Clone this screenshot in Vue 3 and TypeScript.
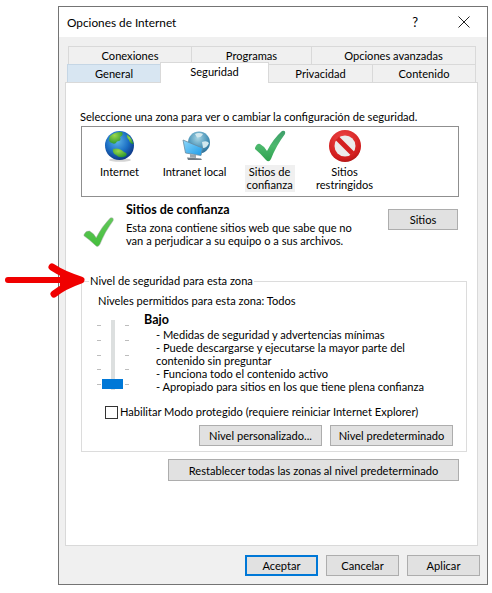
<template>
  <div class="page">
    <div class="dialog">
      <div class="titlebar">
        <span class="title">Opciones de Internet</span>
        <span class="help">?</span>
        <svg class="close" width="12" height="12" viewBox="0 0 12 12">
          <path d="M0.5 0.5 L11.5 11.5 M11.5 0.5 L0.5 11.5" stroke="#222" stroke-width="1" fill="none" />
        </svg>
      </div>

      <div class="body">
        <div class="tabs top-tabs">
          <div v-for="t in topTabs" :key="t.label" class="tab" :style="{ width: t.width + 'px' }">{{ t.label }}</div>
        </div>
        <div class="tabs front-tabs">
          <div
            v-for="t in frontTabs"
            :key="t.label"
            class="tab"
            :class="{ hover: t.label === 'General', active: t.label === 'Seguridad' }"
            :style="{ width: t.width + 'px' }"
          >{{ t.label }}</div>
        </div>

        <div class="panel">
          <div class="intro">Seleccione una zona para ver o cambiar la configuración de seguridad.</div>

          <div class="zones">
            <div class="zone">
              <svg width="34" height="34" viewBox="0 0 34 34">
                <defs>
                  <radialGradient id="sea" cx="0.42" cy="0.35" r="0.7">
                    <stop offset="0" stop-color="#5db4e8" />
                    <stop offset="0.55" stop-color="#1c6fc4" />
                    <stop offset="1" stop-color="#0b2f7c" />
                  </radialGradient>
                  <radialGradient id="land" cx="0.4" cy="0.3" r="0.8">
                    <stop offset="0" stop-color="#9bd84a" />
                    <stop offset="1" stop-color="#1f8f2e" />
                  </radialGradient>
                </defs>
                <ellipse cx="17" cy="31" rx="11" ry="1.8" fill="#d4d4d4" />
                <circle cx="16.5" cy="16.5" r="14.5" fill="url(#sea)" />
                <path d="M7 7 Q12 2.5 19 3 Q21 6 17 8 Q19 12 14 12.5 Q12 16 9 14 Q4.5 13 7 7 Z" fill="url(#land)" />
                <path d="M24 5.5 Q29 9 30.5 15 Q27 15 26 11 Q23 8 24 5.5 Z" fill="url(#land)" />
                <path d="M10 20 Q16 18 21 23 Q25 24 23 27 Q17 30 13 26 Q9 24 10 20 Z" fill="url(#land)" />
              </svg>
              <span class="zone-label">Internet</span>
            </div>

            <div class="zone">
              <svg width="34" height="34" viewBox="0 0 34 34">
                <defs>
                  <radialGradient id="sea2" cx="0.45" cy="0.3" r="0.75">
                    <stop offset="0" stop-color="#a6d4e4" />
                    <stop offset="0.6" stop-color="#4a94b8" />
                    <stop offset="1" stop-color="#2a6a92" />
                  </radialGradient>
                  <linearGradient id="screen" x1="0" y1="0" x2="1" y2="1">
                    <stop offset="0" stop-color="#8fd8fa" />
                    <stop offset="1" stop-color="#1c9be8" />
                  </linearGradient>
                </defs>
                <circle cx="21" cy="13.5" r="11" fill="url(#sea2)" />
                <path d="M17 5 Q21 3 25 5 Q23 9 19 8.5 Z M24 13 Q29 11 31 14 Q29 19 25 19 Z" fill="#d2e8ee" />
                <path d="M5 11 L24.5 19 L23 26.5 L7.5 24 Z" fill="url(#screen)" stroke="#6b8ba0" stroke-width="0.8" />
                <path d="M12 25 L18 26 L18 29 L12 28.5 Z" fill="#9aa6ad" />
                <path d="M9 28.5 L23 29.5 L24 31 L10 31 Z" fill="#6f7b84" />
              </svg>
              <span class="zone-label">Intranet local</span>
            </div>

            <div class="zone">
              <svg width="34" height="34" viewBox="0 0 34 34">
                <defs>
                  <linearGradient id="trust" x1="0" y1="0" x2="0" y2="1">
                    <stop offset="0" stop-color="#3f9e6b" />
                    <stop offset="0.5" stop-color="#4cb86d" />
                    <stop offset="1" stop-color="#2fa14e" />
                  </linearGradient>
                </defs>
                <path d="M2 19 Q4 14 7 15 Q11 17 14 22 Q20 10 29 2 Q33 1 32 5 Q23 17 18 30 Q16 34 13 31 Q8 25 2 20 Z" fill="url(#trust)" />
              </svg>
              <span class="zone-label selected">Sitios de<br />confianza</span>
            </div>

            <div class="zone">
              <svg width="34" height="34" viewBox="0 0 34 34">
                <defs>
                  <radialGradient id="ban" cx="0.45" cy="0.3" r="0.8">
                    <stop offset="0" stop-color="#f04848" />
                    <stop offset="0.75" stop-color="#cf1c1c" />
                    <stop offset="1" stop-color="#961010" />
                  </radialGradient>
                </defs>
                <circle cx="17" cy="17" r="16" fill="url(#ban)" />
                <circle cx="17" cy="17" r="10.5" fill="#ececec" />
                <path d="M7.5 11 L11 7.5 L26.5 23 L23 26.5 Z" fill="#d42020" />
              </svg>
              <span class="zone-label">Sitios<br />restringidos</span>
            </div>
          </div>

          <div class="details">
            <svg class="details-check" width="32" height="34" viewBox="0 0 34 34">
              <defs>
                <linearGradient id="trust2" x1="0" y1="0" x2="0" y2="1">
                  <stop offset="0" stop-color="#62c85a" />
                  <stop offset="1" stop-color="#44be3c" />
                </linearGradient>
              </defs>
              <path d="M1 20 Q3 15 7 16 Q11 18 14 23 Q20 11 29 2 Q33 1 32 5 Q23 17 18 30 Q16 34 13 31 Q8 26 1 21 Z" fill="url(#trust2)" stroke="#a6a6a6" stroke-width="0.5" />
            </svg>
            <div class="details-text">
              <div class="details-title">Sitios de confianza</div>
              <div class="details-desc">Esta zona contiene sitios web que sabe que no<br />van a perjudicar a su equipo o a sus archivos.</div>
            </div>
            <button class="btn sites-btn">Sitios</button>
          </div>

          <fieldset class="group">
            <legend>Nivel de seguridad para esta zona</legend>
            <div class="allowed">Niveles permitidos para esta zona: Todos</div>
            <div class="level">
              <svg class="slider" width="36" height="74" viewBox="0 0 36 74">
                <rect x="15" y="0" width="4" height="70" fill="#dcdfdf" />
                <g fill="#bdbdbd">
                  <rect v-for="y in ticks" :key="'l' + y" x="1" :y="y" width="4" height="1" />
                  <rect v-for="y in ticks" :key="'r' + y" x="29" :y="y" width="4" height="1" />
                </g>
                <rect x="6" y="59" width="21" height="10" fill="#0078d7" />
              </svg>
              <div class="level-text">
                <div class="level-name">Bajo</div>
                <div class="level-list">
                  - Medidas de seguridad y advertencias mínimas<br />
                  - Puede descargarse y ejecutarse la mayor parte del<br />
                  contenido sin preguntar<br />
                  - Funciona todo el contenido activo<br />
                  - Apropiado para sitios en los que tiene plena confianza
                </div>
              </div>
            </div>
            <div class="protect">
              <span class="checkbox"></span>
              <span>Habilitar Modo protegido (requiere reiniciar Internet Explorer)</span>
            </div>
            <div class="group-buttons">
              <button class="btn level-btn">Nivel personalizado...</button>
              <button class="btn level-btn">Nivel predeterminado</button>
            </div>
          </fieldset>

          <div class="reset-row">
            <button class="btn reset-btn">Restablecer todas las zonas al nivel predeterminado</button>
          </div>
        </div>

        <div class="footer">
          <button class="btn foot-btn primary">Aceptar</button>
          <button class="btn foot-btn">Cancelar</button>
          <button class="btn foot-btn">Aplicar</button>
        </div>
      </div>
    </div>

    <svg class="arrow" width="90" height="40" viewBox="0 0 90 40">
      <path d="M6 20 L78 20" stroke="#f00000" stroke-width="6" stroke-linecap="round" fill="none" />
      <path d="M50 7 Q62 15 79 20 Q62 26 52 34" stroke="#f00000" stroke-width="7" stroke-linecap="round" stroke-linejoin="round" fill="none" />
      <path d="M58 13 L81 20 L58 28 Z" fill="#f00000" />
    </svg>
  </div>
</template>

<script setup lang="ts">
const topTabs = [
  { label: 'Conexiones', width: 123 },
  { label: 'Programas', width: 120 },
  { label: 'Opciones avanzadas', width: 165 },
]

const frontTabs = [
  { label: 'General', width: 93 },
  { label: 'Seguridad', width: 109 },
  { label: 'Privacidad', width: 103 },
  { label: 'Contenido', width: 104 },
]

const ticks = [5, 20, 35, 49, 64]
</script>

<style>
html, body {
  background: #fff;
}
</style>

<style scoped>
.page {
  position: relative;
  width: 492px;
  height: 593px;
  overflow: hidden;
  padding: 6px 0 0 58px;
  box-sizing: border-box;
  font-family: Lato, "Noto Sans", sans-serif;
  font-size: 11.1px;
  color: #000;
}

.dialog {
  width: 430px;
  height: 579px;
  box-sizing: border-box;
  border: 1px solid #747474;
  background: #f0f0f0;
  display: flex;
  flex-direction: column;
}

.titlebar {
  height: 30px;
  background: #fff;
  display: flex;
  align-items: center;
  flex-shrink: 0;
}

.title {
  margin-left: 8px;
  font-size: 11.8px;
  color: #000;
}

.help {
  margin-left: auto;
  font-size: 13px;
  margin-right: 40px;
}

.close {
  margin-right: 17px;
}

.body {
  flex: 1;
  padding-top: 9px;
  display: flex;
  flex-direction: column;
}

.tabs {
  display: flex;
  position: relative;
}

.top-tabs {
  margin-left: 9px;
  height: 18px;
}

.top-tabs .tab {
  border-left: 1px solid #d9d9d9;
  border-top: 1px solid #d9d9d9;
}

.top-tabs .tab:last-child {
  border-right: 1px solid #d9d9d9;
}

.front-tabs {
  margin-left: 8px;
  height: 18px;
  z-index: 1;
}

.tab {
  box-sizing: border-box;
  background: #f0f0f0;
  text-align: center;
  line-height: 17px;
  border-left: 1px solid #d9d9d9;
  border-top: 1px solid #d9d9d9;
}

.front-tabs .tab:last-child {
  border-right: 1px solid #d9d9d9;
}

.tab.hover {
  background: #d8e6f2;
  border-color: #c5d6e5;
}

.tab.active {
  background: #fff;
  margin-top: -2px;
  height: 21px;
  line-height: 17px;
  border-right: 1px solid #d9d9d9;
  position: relative;
  z-index: 2;
}

.tab.active + .tab {
  border-left: none;
}

.panel {
  margin-left: 6px;
  width: 413px;
  height: 464px;
  box-sizing: border-box;
  flex-shrink: 0;
  background: #fff;
  border: 1px solid #d9d9d9;
  padding: 27px 0 0 14px;
}

.intro {
  line-height: 14px;
  white-space: nowrap;
}

.zones {
  margin: 2px 0 0 1px;
  width: 378px;
  height: 71px;
  box-sizing: border-box;
  border: 1px solid #8f8f8f;
  display: flex;
}

.zone {
  width: 75px;
  display: flex;
  flex-direction: column;
  align-items: center;
  padding-top: 2px;
  flex-shrink: 0;
}

.zone svg {
  flex-shrink: 0;
}

.zone-label {
  margin-top: 2px;
  line-height: 13px;
  text-align: center;
  white-space: nowrap;
}

.zone-label.selected {
  background: #f0f0f0;
  padding: 0 2px 1px;
  width: 50px;
  box-sizing: border-box;
}

.details {
  margin-top: 6px;
  height: 50px;
  display: flex;
  align-items: flex-start;
}

.details-check {
  margin: 12px 0 0 3px;
  flex-shrink: 0;
}

.details-text {
  margin-left: 11px;
  width: 262px;
}

.details-title {
  font-size: 12.5px;
  font-weight: 700;
  line-height: 14px;
}

.details-desc {
  margin-top: 4px;
  line-height: 13px;
  white-space: nowrap;
}

.btn {
  box-sizing: border-box;
  background: #e1e1e1;
  border: 1px solid #adadad;
  font: inherit;
  color: #000;
  padding: 0;
  white-space: nowrap;
}

.sites-btn {
  width: 70px;
  height: 21px;
  margin-top: 6px;
}

.group {
  margin: 21px 0 0 1px;
  width: 386px;
  height: 178px;
  box-sizing: border-box;
  border: 1px solid #dcdcdc;
  padding: 6px 0 0 16px;
  min-width: 0;
}

.group legend {
  margin-left: -9px;
  padding: 0 1px;
  line-height: 14px;
  white-space: nowrap;
}

.allowed {
  line-height: 14px;
  white-space: nowrap;
}

.level {
  margin-top: 5px;
  display: flex;
}

.slider {
  margin: 7px 0 0 -2px;
  flex-shrink: 0;
}

.level-text {
  margin-left: 12px;
}

.level-name {
  font-size: 12.5px;
  font-weight: 700;
  line-height: 14px;
  margin-bottom: 1px;
}

.level-list {
  margin-left: 12px;
  line-height: 13px;
  white-space: nowrap;
}

.protect {
  margin: 11px 0 0 7px;
  display: flex;
  align-items: center;
  gap: 2px;
  line-height: 14px;
  white-space: nowrap;
}

.checkbox {
  width: 13px;
  height: 13px;
  box-sizing: border-box;
  border: 1px solid #333;
  background: #fff;
}

.group-buttons {
  margin: 6px 13px 0 0;
  display: flex;
  justify-content: flex-end;
  gap: 8px;
}

.level-btn {
  width: 123px;
  height: 21px;
}

.reset-row {
  margin: 7px 0 0 88px;
}

.reset-btn {
  width: 291px;
  height: 22px;
}

.footer {
  margin: 9px 7px 0 0;
  display: flex;
  justify-content: flex-end;
  gap: 8px;
}

.foot-btn {
  width: 73px;
  height: 21px;
}

.foot-btn.primary {
  border: 2px solid #0078d7;
}

.arrow {
  position: absolute;
  left: 2px;
  top: 260px;
}
</style>
